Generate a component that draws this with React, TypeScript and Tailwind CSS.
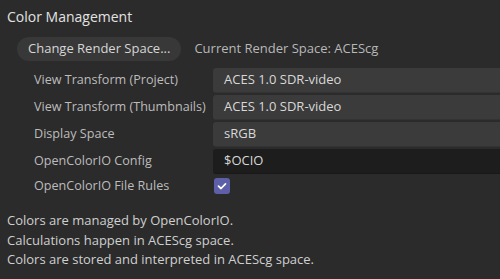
import React from "react";

const rows = [
  { label: "View Transform (Project)", value: "ACES 1.0 SDR-video", dark: false },
  { label: "View Transform (Thumbnails)", value: "ACES 1.0 SDR-video", dark: false },
  { label: "Display Space", value: "sRGB", dark: false },
  { label: "OpenColorIO Config", value: "$OCIO", dark: true },
];

export default function App() {
  return (
    <div
      className="w-[500px] h-[279px] bg-[#2b2b2b] overflow-hidden flex flex-col text-[13px] text-[#c8c8c8]"
      style={{ fontFamily: '"Open Sans", "Noto Sans", sans-serif' }}
    >
      <div className="pl-[7px] pt-[7px] h-[20px] leading-[20px] text-[14px] text-[#e2e2e2] box-content">
        Color Management
      </div>
      <div className="flex items-center mt-[10px] pl-[17px]">
        <div className="h-[24px] rounded-[12px] bg-[#383838] px-[11px] flex items-center text-[#d6d6d6]">
          Change Render Space...
        </div>
        <div className="ml-[13px] text-[#b8b8b8]">Current Render Space: ACEScg</div>
      </div>
      <div className="flex flex-col gap-[2px] mt-[7px]">
        {rows.map((r) => (
          <div key={r.label} className="flex items-center h-[25px]">
            <div className="w-[179px] pl-[34px] box-content text-[12.6px] text-[#bcbcbc] whitespace-nowrap">
              {r.label}
            </div>
            <div
              className={
                "flex-1 h-full rounded-l-[3px] flex items-center pl-[11px] text-[#d8d8d8] " +
                (r.dark ? "bg-[#1d1d1d] border-b border-[#181818]" : "bg-[#3b3b3b] border-b border-[#333333]")
              }
            >
              {r.value}
            </div>
          </div>
        ))}
        <div className="flex items-center h-[20px]">
          <div className="w-[179px] pl-[34px] box-content text-[12.6px] text-[#bcbcbc] whitespace-nowrap">
            OpenColorIO File Rules
          </div>
          <div className="ml-[1px] w-[16px] h-[16px] rounded-[3px] bg-[#5d5fa8] flex items-center justify-center">
            <svg width="10" height="10" viewBox="0 0 10 10">
              <path d="M1.5 5.2 L4 7.5 L8.5 2.8" fill="none" stroke="#ffffff" strokeWidth="1.7" strokeLinecap="round" strokeLinejoin="round" />
            </svg>
          </div>
        </div>
      </div>
      <div className="pl-[7px] mt-[15px] leading-[19.5px] text-[#cfcfcf]">
        <div>Colors are managed by OpenColorIO.</div>
        <div>Calculations happen in ACEScg space.</div>
        <div>Colors are stored and interpreted in ACEScg space.</div>
      </div>
    </div>
  );
}
